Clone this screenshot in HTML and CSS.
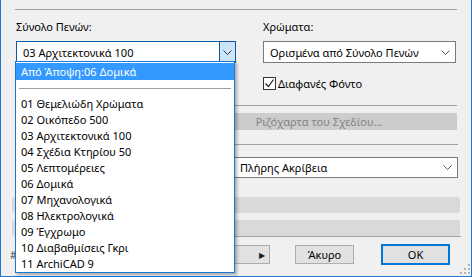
FILE: index.html
```html
<!DOCTYPE html>
<html lang="el">
<head>
    <meta charset="UTF-8">
    <meta name="viewport" content="width=device-width, initial-scale=1.0">
    <title>Σύνολο Πενών</title>
    <link rel="stylesheet" href="styles.css">
</head>
<body>
    <div class="dialog">
        <div class="sep"></div>

        <div class="top-row">
            <div class="field">
                <label class="lbl">Σύνολο Πενών:</label>
                <div class="combo combo-active">
                    <span class="combo-text">03 Αρχιτεκτονικά 100</span>
                    <span class="combo-btn">
                        <svg width="9" height="5" viewBox="0 0 9 5"><path d="M0.5 0.5 L4.5 4.5 L8.5 0.5" fill="none" stroke="#333" stroke-width="1"/></svg>
                    </span>
                </div>
            </div>
            <div class="field">
                <label class="lbl">Χρώματα:</label>
                <div class="combo">
                    <span class="combo-text">Ορισμένα από Σύνολο Πενών</span>
                    <span class="chev">
                        <svg width="9" height="5" viewBox="0 0 9 5"><path d="M0.5 0.5 L4.5 4.5 L8.5 0.5" fill="none" stroke="#555" stroke-width="1"/></svg>
                    </span>
                </div>
                <label class="check">
                    <span class="box">
                        <svg width="11" height="11" viewBox="0 0 11 11"><path d="M1.5 5.5 L4.5 8.5 L9.5 1.5" fill="none" stroke="#222" stroke-width="1.2"/></svg>
                    </span>
                    Διαφανές Φόντο
                </label>
            </div>
        </div>

        <div class="sep sep-mid"></div>

        <div class="btn-row">
            <div class="gbtn"></div>
            <div class="gbtn">Ριζόχαρτα του Σχεδίου...</div>
        </div>

        <div class="sep sep-mid2"></div>

        <div class="mode-row">
            <div class="mode-left"></div>
            <div class="combo combo-mode">
                <span class="combo-text">Πλήρης Ακρίβεια</span>
                <span class="chev">
                    <svg width="9" height="5" viewBox="0 0 9 5"><path d="M0.5 0.5 L4.5 4.5 L8.5 0.5" fill="none" stroke="#555" stroke-width="1"/></svg>
                </span>
            </div>
        </div>

        <div class="bar bar-first"></div>
        <div class="bar"></div>

        <div class="sep sep-bottom"></div>

        <div class="bottom-row">
            <span class="glyph">#</span>
            <div class="btn btn-more">&#9654;</div>
            <div class="btn btn-cancel">Άκυρο</div>
            <div class="btn btn-ok">OK</div>
        </div>

        <div class="grip">
            <svg width="10" height="10" viewBox="0 0 10 10" fill="#b4b4b4">
                <rect x="8" y="0" width="2" height="2"/>
                <rect x="4" y="4" width="2" height="2"/><rect x="8" y="4" width="2" height="2"/>
                <rect x="0" y="8" width="2" height="2"/><rect x="4" y="8" width="2" height="2"/><rect x="8" y="8" width="2" height="2"/>
            </svg>
        </div>

        <!-- open dropdown of the pen set combo -->
        <ul class="dropdown">
            <li class="selected">Από Άποψη:06 Δομικά</li>
            <li class="divider"><span></span></li>
            <li>01 Θεμελιώδη Χρώματα</li>
            <li>02 Οικόπεδο 500</li>
            <li>03 Αρχιτεκτονικά 100</li>
            <li>04 Σχέδια Κτηρίου 50</li>
            <li>05 Λεπτομέρειες</li>
            <li>06 Δομικά</li>
            <li>07 Μηχανολογικά</li>
            <li>08 Ηλεκτρολογικά</li>
            <li>09 Έγχρωμο</li>
            <li>10 Διαβαθμίσεις Γκρι</li>
            <li>11 ArchiCAD 9</li>
        </ul>
    </div>
</body>
</html>
```

FILE: styles.css
```css
/* Whole dialog */
html, body {
  margin: 0;
  padding: 0;
}

body {
  font-family: "Noto Sans", "Open Sans", sans-serif;
  font-size: 11px;
  color: #000;
  background: #f0f0f0;
}

.dialog {
  position: relative;
  box-sizing: border-box;
  width: 472px;
  height: 277px;
  padding: 9px 14px 0 14px;
  background: #f0f0f0;
  border-left: 1px solid #1c78d0;
  border-right: 1px solid #1c78d0;
  border-bottom: 1px solid #1c78d0;
}

/* Separator lines */
.sep {
  height: 1px;
  background: #a0a0a0;
}

.sep-mid {
  margin-top: 15px;
}

.sep-mid2 {
  margin-top: 14px;
  margin-right: -1px;
}

.sep-bottom {
  margin-right: -4px;
}

/* Top area with the two combos */
.top-row {
  display: grid;
  grid-template-columns: 220px 193px;
  column-gap: 27px;
  padding-left: 1px;
}

.lbl {
  display: block;
  height: 16px;
  line-height: 16px;
  margin-top: 9px;
  margin-bottom: 6px;
}

.combo {
  box-sizing: border-box;
  display: flex;
  align-items: center;
  height: 22px;
  background: #fff;
  border: 1px solid #7a7a7a;
}

.combo-text {
  flex: 1;
  padding-left: 6px;
  white-space: nowrap;
  overflow: hidden;
}

.chev {
  width: 16px;
  display: flex;
  justify-content: center;
  margin-right: 2px;
}

.combo-active {
  border-color: #0d5fa6;
}

.combo-btn {
  box-sizing: border-box;
  width: 17px;
  height: 22px;
  margin: -1px -1px -1px 0;
  display: flex;
  align-items: center;
  justify-content: center;
  background: #cce4f7;
  border: 1px solid #0d5aa0;
}

/* Checkbox */
.check {
  display: flex;
  align-items: center;
  margin-top: 13px;
  height: 14px;
}

.box {
  box-sizing: border-box;
  width: 13px;
  height: 13px;
  margin-right: 2px;
  background: #fff;
  border: 1px solid #333;
  display: flex;
  align-items: center;
  justify-content: center;
}

/* Disabled button row */
.btn-row {
  display: grid;
  grid-template-columns: 164px 1fr;
  column-gap: 2px;
  margin-top: 7px;
}

.gbtn {
  height: 17px;
  line-height: 17px;
  text-align: center;
  background: #cccccc;
  color: #838383;
}

/* Output mode */
.mode-row {
  display: flex;
  margin-top: 12px;
  margin-right: -1px;
}

.mode-left {
  flex: 1;
}

.combo-mode {
  width: 224px;
  height: 21px;
  border-left: 1px dotted #222;
}

.combo-mode .combo-text {
  padding-left: 5px;
}

/* Disabled slider bars */
.bar {
  height: 16px;
  margin: 0 -3px 0 -3px;
  background: #d9d9d9;
  border-radius: 3px;
}

.bar-first {
  margin-top: 19px;
  margin-bottom: 7px;
}

/* Bottom buttons */
.bottom-row {
  display: flex;
  align-items: center;
  height: 21px;
  margin-top: 7px;
}

.glyph {
  width: 0;
  margin-left: -5px;
  font-size: 10px;
  color: #444;
  overflow: visible;
}

.btn {
  box-sizing: border-box;
  height: 19px;
  line-height: 17px;
  text-align: center;
  background: #e1e1e1;
  border: 1px solid #adadad;
}

.btn-more {
  margin-left: 6px;
  width: 254px;
  text-align: right;
  padding-right: 4px;
  font-size: 8px;
  color: #222;
}

.btn-cancel {
  width: 59px;
  margin-left: 25px;
}

.btn-ok {
  width: 69px;
  height: 21px;
  line-height: 17px;
  margin-left: 27px;
  border: 2px solid #0078d7;
}

.grip {
  position: absolute;
  right: 1px;
  bottom: 2px;
  line-height: 0;
}

/* Popup list that lies over the dialog */
.dropdown {
  position: absolute;
  left: 14px;
  top: 61px;
  width: 220px;
  height: 212px;
  box-sizing: border-box;
  margin: 0;
  padding: 1px 0 0 0;
  list-style: none;
  background: #fff;
  border: 1px solid #1c78d0;
  box-shadow: 2px 2px 3px rgba(0, 0, 0, 0.3);
}

.dropdown li {
  height: 16px;
  line-height: 16px;
  padding-left: 5px;
  white-space: nowrap;
}

.dropdown li.selected {
  height: 17px;
  line-height: 17px;
  background: #3399ff;
  color: #fff;
}

.dropdown li.divider {
  height: 16px;
  display: flex;
  align-items: center;
  padding: 0 3px;
}

.dropdown li.divider span {
  flex: 1;
  height: 1px;
  background: #a0a0a0;
}
```
